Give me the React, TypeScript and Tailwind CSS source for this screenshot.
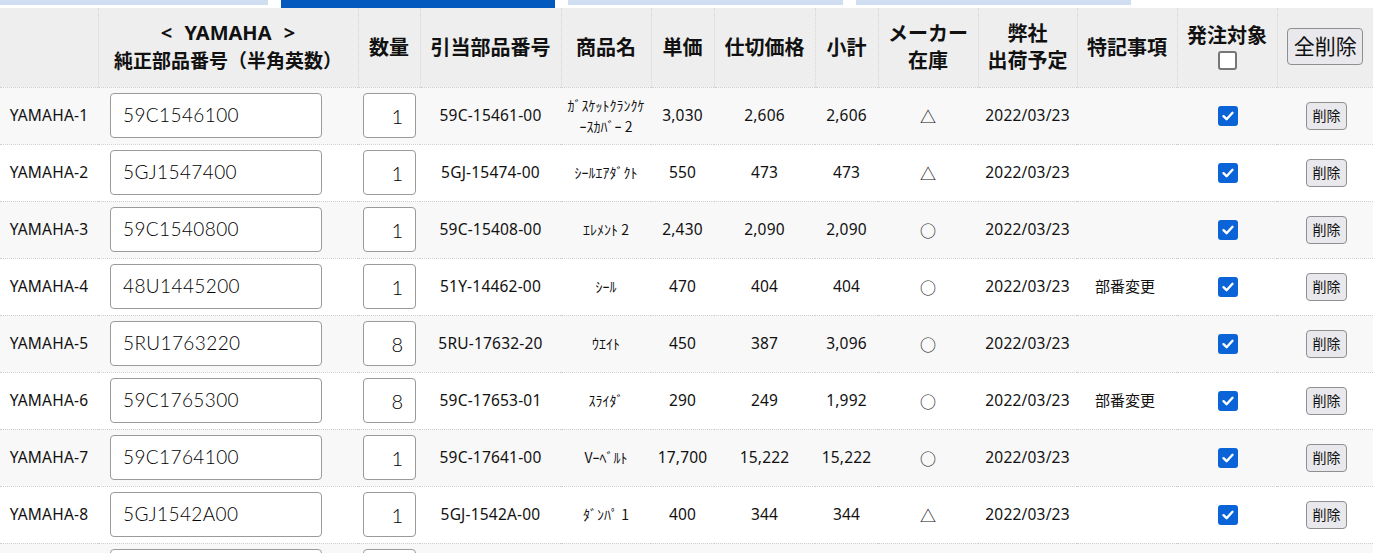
import React from 'react';

type Row = {
  no: string;
  part: string;
  qty: string;
  alloc: string;
  name: string;
  price: string;
  net: string;
  subtotal: string;
  stock: string;
  ship: string;
  note: string;
};

const rows: Row[] = [
  { no: 'YAMAHA-1', part: '59C1546100', qty: '1', alloc: '59C-15461-00', name: 'ｶﾞｽｹｯﾄｸﾗﾝｸｹｰｽｶﾊﾞｰ 2', price: '3,030', net: '2,606', subtotal: '2,606', stock: '△', ship: '2022/03/23', note: '' },
  { no: 'YAMAHA-2', part: '5GJ1547400', qty: '1', alloc: '5GJ-15474-00', name: 'ｼｰﾙｴｱﾀﾞｸﾄ', price: '550', net: '473', subtotal: '473', stock: '△', ship: '2022/03/23', note: '' },
  { no: 'YAMAHA-3', part: '59C1540800', qty: '1', alloc: '59C-15408-00', name: 'ｴﾚﾒﾝﾄ 2', price: '2,430', net: '2,090', subtotal: '2,090', stock: '○', ship: '2022/03/23', note: '' },
  { no: 'YAMAHA-4', part: '48U1445200', qty: '1', alloc: '51Y-14462-00', name: 'ｼｰﾙ', price: '470', net: '404', subtotal: '404', stock: '○', ship: '2022/03/23', note: '部番変更' },
  { no: 'YAMAHA-5', part: '5RU1763220', qty: '8', alloc: '5RU-17632-20', name: 'ｳｴｲﾄ', price: '450', net: '387', subtotal: '3,096', stock: '○', ship: '2022/03/23', note: '' },
  { no: 'YAMAHA-6', part: '59C1765300', qty: '8', alloc: '59C-17653-01', name: 'ｽﾗｲﾀﾞ', price: '290', net: '249', subtotal: '1,992', stock: '○', ship: '2022/03/23', note: '部番変更' },
  { no: 'YAMAHA-7', part: '59C1764100', qty: '1', alloc: '59C-17641-00', name: 'Vｰﾍﾞﾙﾄ', price: '17,700', net: '15,222', subtotal: '15,222', stock: '○', ship: '2022/03/23', note: '' },
  { no: 'YAMAHA-8', part: '5GJ1542A00', qty: '1', alloc: '5GJ-1542A-00', name: 'ﾀﾞﾝﾊﾟ 1', price: '400', net: '344', subtotal: '344', stock: '△', ship: '2022/03/23', note: '' },
  { no: 'YAMAHA-9', part: '', qty: '', alloc: '', name: '', price: '', net: '', subtotal: '', stock: '', ship: '', note: '' },
];

const th = 'border-l border-dotted border-[#d6d6d6] first:border-l-0 px-1 text-[20px] font-bold leading-[27px] text-center align-middle';
const td = 'px-1 text-[15.5px] tracking-[0.2px] text-center align-middle';
const inputFont = { fontFamily: 'Lato, "Liberation Sans", sans-serif' };

export default function App() {
  return (
    <div className="w-[1373px] bg-white text-[#111]" style={{ fontFamily: '"Noto Sans", "Noto Sans CJK JP", sans-serif' }}>
      {/* step tabs */}
      <div className="flex items-start gap-[13px] h-[8px]">
        <div className="w-[268px] h-[5px] bg-[#cfdff1]" />
        <div className="w-[274px] h-[8px] bg-[#0359bd]" />
        <div className="w-[275px] h-[5px] bg-[#cfdff1]" />
        <div className="w-[275px] h-[5px] bg-[#cfdff1]" />
      </div>

      <table className="w-[1373px] table-fixed border-collapse">
        <colgroup>
          <col className="w-[98px]" />
          <col className="w-[260px]" />
          <col className="w-[62px]" />
          <col className="w-[141px]" />
          <col className="w-[90px]" />
          <col className="w-[63px]" />
          <col className="w-[101px]" />
          <col className="w-[63px]" />
          <col className="w-[100px]" />
          <col className="w-[99px]" />
          <col className="w-[100px]" />
          <col className="w-[100px]" />
          <col className="w-[96px]" />
        </colgroup>
        <thead>
          <tr className="h-[79px] bg-[#eeeeee]">
            <th className={th} />
            <th className={th}>
              <div className="leading-[29px] [word-spacing:7px]">&lt; YAMAHA &gt;</div>
              <div className="leading-[29px] text-[19px]">純正部品番号（半角英数）</div>
            </th>
            <th className={th}>数量</th>
            <th className={th}>引当部品番号</th>
            <th className={th}>商品名</th>
            <th className={th}>単価</th>
            <th className={th}>仕切価格</th>
            <th className={th}>小計</th>
            <th className={th}>
              <div>メーカー</div>
              <div>在庫</div>
            </th>
            <th className={th}>
              <div>弊社</div>
              <div>出荷予定</div>
            </th>
            <th className={th}>特記事項</th>
            <th className={th}>
              <div className="-mt-[2px]">発注対象</div>
              <div className="flex justify-center">
                <span className="w-[19px] h-[19px] mt-[2px] rounded-[3px] border-2 border-[#767676] bg-white" />
              </div>
            </th>
            <th className={th}>
              <button className="w-[76px] h-[37px] -mt-[2px] rounded-[4px] border border-[#8f8f8f] bg-[#e9e9ed] text-[21px] font-normal leading-none text-[#111]">
                全削除
              </button>
            </th>
          </tr>
        </thead>
        <tbody>
          {rows.map((r, i) => (
            <tr key={r.no} className={`h-[57px] border-t border-dotted border-[#cfcfcf] ${i % 2 === 0 ? 'bg-[#f8f8f8]' : 'bg-white'}`}>
              <td className={td}>{r.no}</td>
              <td className="px-[12px] align-middle">
                <div className="w-[212px] h-[45px] rounded-[4px] border border-[#9a9a9a] bg-white flex items-center px-[12px] text-[19px] font-light tracking-[0.4px] text-black" style={inputFont}>
                  {r.part}
                </div>
              </td>
              <td className="pl-[5px] align-middle">
                <div className="w-[53px] h-[45px] rounded-[4px] border border-[#9a9a9a] bg-white flex items-center justify-end pr-[12px] text-[20px] font-light text-black" style={inputFont}>
                  {r.qty}
                </div>
              </td>
              <td className={td}>{r.alloc}</td>
              <td className="px-[5px] text-[14px] leading-[21px] text-center align-middle" style={{ fontFamily: '"Noto Sans CJK JP", sans-serif' }}>{r.name}</td>
              <td className={td}>{r.price}</td>
              <td className={td}>{r.net}</td>
              <td className={td}>{r.subtotal}</td>
              <td className={`${td} text-[16px]`} style={{ fontFamily: '"Noto Sans CJK JP", sans-serif' }}>{r.stock}</td>
              <td className={td}>{r.ship}</td>
              <td className="px-[18px] text-[15px] text-left align-middle">{r.note}</td>
              <td className="align-middle">
                {r.no !== 'YAMAHA-9' && (
                  <div className="flex justify-center pl-[2px]">
                    <span className="w-[20px] h-[20px] rounded-[3px] bg-[#0a64d8] flex items-center justify-center">
                      <svg width="14" height="14" viewBox="0 0 14 14" fill="none">
                        <path d="M2.5 7.2 L5.6 10.2 L11.5 3.8" stroke="white" strokeWidth="2.4" strokeLinecap="round" strokeLinejoin="round" />
                      </svg>
                    </span>
                  </div>
                )}
              </td>
              <td className="align-middle">
                {r.no !== 'YAMAHA-9' && (
                  <div className="flex justify-center pl-[3px]">
                    <button className="w-[41px] h-[28px] rounded-[4px] border border-[#8f8f8f] bg-[#e9e9ed] text-[14px] leading-none text-[#111]">
                      削除
                    </button>
                  </div>
                )}
              </td>
            </tr>
          ))}
        </tbody>
      </table>
    </div>
  );
}
